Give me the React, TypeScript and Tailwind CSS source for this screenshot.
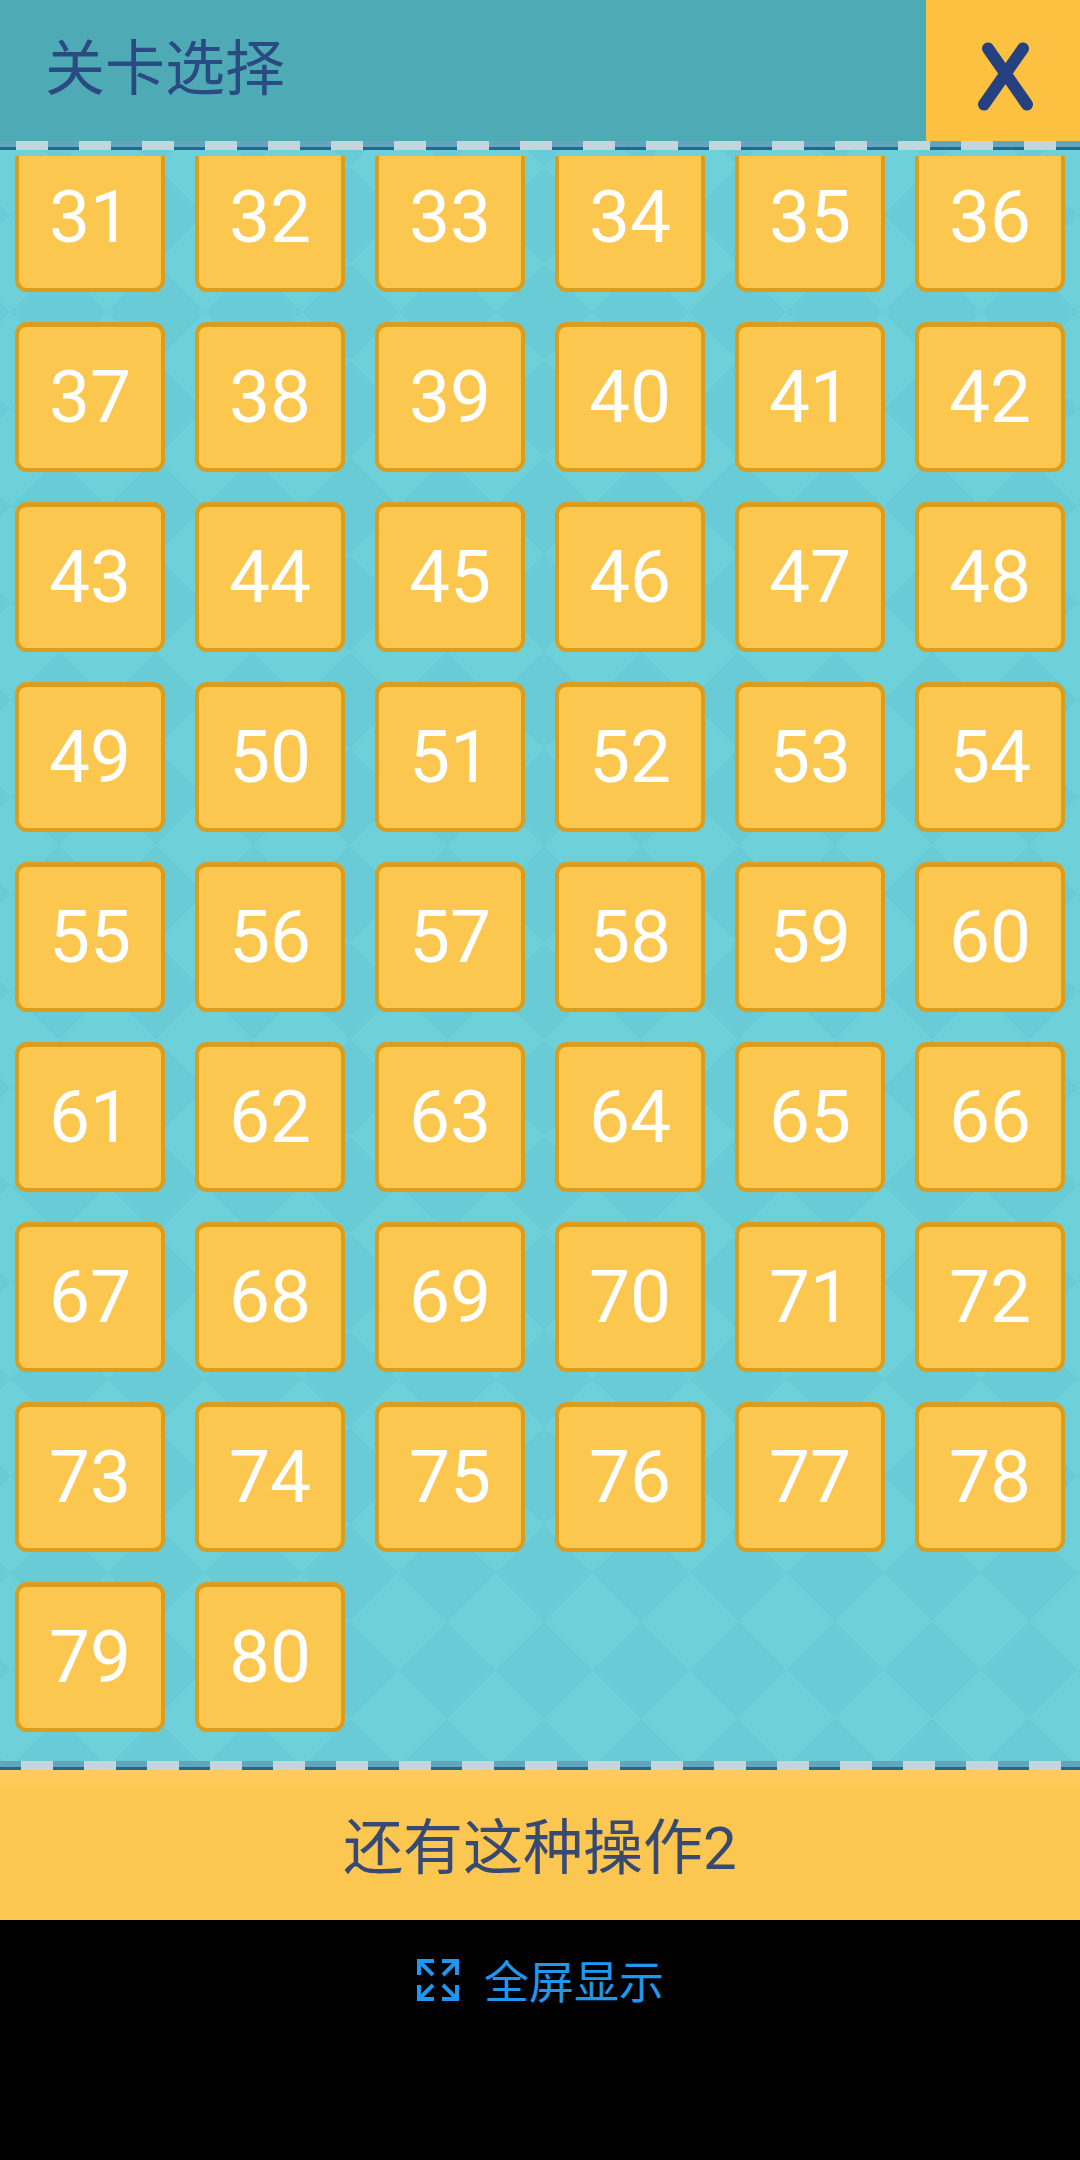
import React from 'react';

const levels = Array.from({ length: 50 }, (_, i) => i + 31);
const cjk = "font-['Noto_Sans_CJK_SC','Noto_Sans',sans-serif]";

const DashStrip = ({ className }: { className: string }) => (
  <div
    className={`h-[9px] shrink-0 bg-[linear-gradient(90deg,#c4d5de_32px,transparent_32px),linear-gradient(#62a6bd_6px,#1f6a8e_6px)] bg-size-[63px_100%,100%_100%] ${className}`}
  />
);

const FullscreenIcon = () => (
  <svg className="mt-[2px]" width="42" height="42" viewBox="0 0 42 42" fill="none" stroke="#2196ee" strokeWidth="4">
    <path d="M17 2H2V16M3 3l13 13" />
    <path d="M25 2h15V16M39 3L26 16" />
    <path d="M2 26v14H17M3 39l13-13" />
    <path d="M40 26v14H25M39 39L26 26" />
  </svg>
);

export default function App() {
  return (
    <div className="flex h-[2160px] w-[1080px] flex-col bg-black">
      <header className="flex h-[141px] shrink-0 items-center justify-between bg-[#4eabb5]">
        <h1 className={`pb-[14px] pl-[45px] text-[60px] leading-none font-normal text-[#2a4b82] ${cjk}`}>关卡选择</h1>
        <button className="flex h-full w-[154px] items-center justify-center bg-[#fcc141]">
          <svg width="60" height="80" viewBox="0 0 60 80" fill="none" stroke="#26417f" strokeWidth="12" strokeLinecap="round">
            <path d="M15 17.500l39 56M50 17.500L11 73.500" />
          </svg>
        </button>
      </header>
      <DashStrip className="bg-position-[16px_0,0_0]" />

      <main className="flex h-[1611px] shrink-0 flex-col bg-[#6ed0d9] bg-[linear-gradient(to_bottom_right,#68cbd5_25%,transparent_25%,transparent_75%,#68cbd5_75%),linear-gradient(to_bottom_left,#68cbd5_25%,transparent_25%,transparent_75%,#68cbd5_75%)] bg-size-[97px_97px] bg-position-[59px_65px] pt-[6px]">
        <div className="flex-1 overflow-hidden">
          <div className="-mt-[14px] grid grid-cols-[repeat(6,150px)] gap-[30px] pl-[15px]">
            {levels.map((n) => (
              <button
                key={n}
                className="flex h-[150px] w-[150px] items-center justify-center rounded-[12px] border-[4px] border-t-[5px] border-[#dc9c1c] bg-[#fcc74f] font-['Roboto',sans-serif] text-[73px] leading-none text-white"
              >
                {n}
              </button>
            ))}
          </div>
        </div>
      </main>
      <DashStrip className="bg-position-[21px_0,0_0]" />

      <footer className="flex h-[150px] shrink-0 items-center justify-center bg-[linear-gradient(#fdcb5d,#fcc750_30px)] pt-[7px] font-['Roboto','Noto_Sans_CJK_SC',sans-serif] text-[60px] leading-none text-[#374a74]">
        还有这种操作2
      </footer>

      <div className={`flex h-[120px] shrink-0 items-center justify-center gap-[25px] pb-[2px] pl-[1px] text-[45px] leading-none text-[#2196ee] ${cjk}`}>
        <FullscreenIcon />
        <span>全屏显示</span>
      </div>
    </div>
  );
}
